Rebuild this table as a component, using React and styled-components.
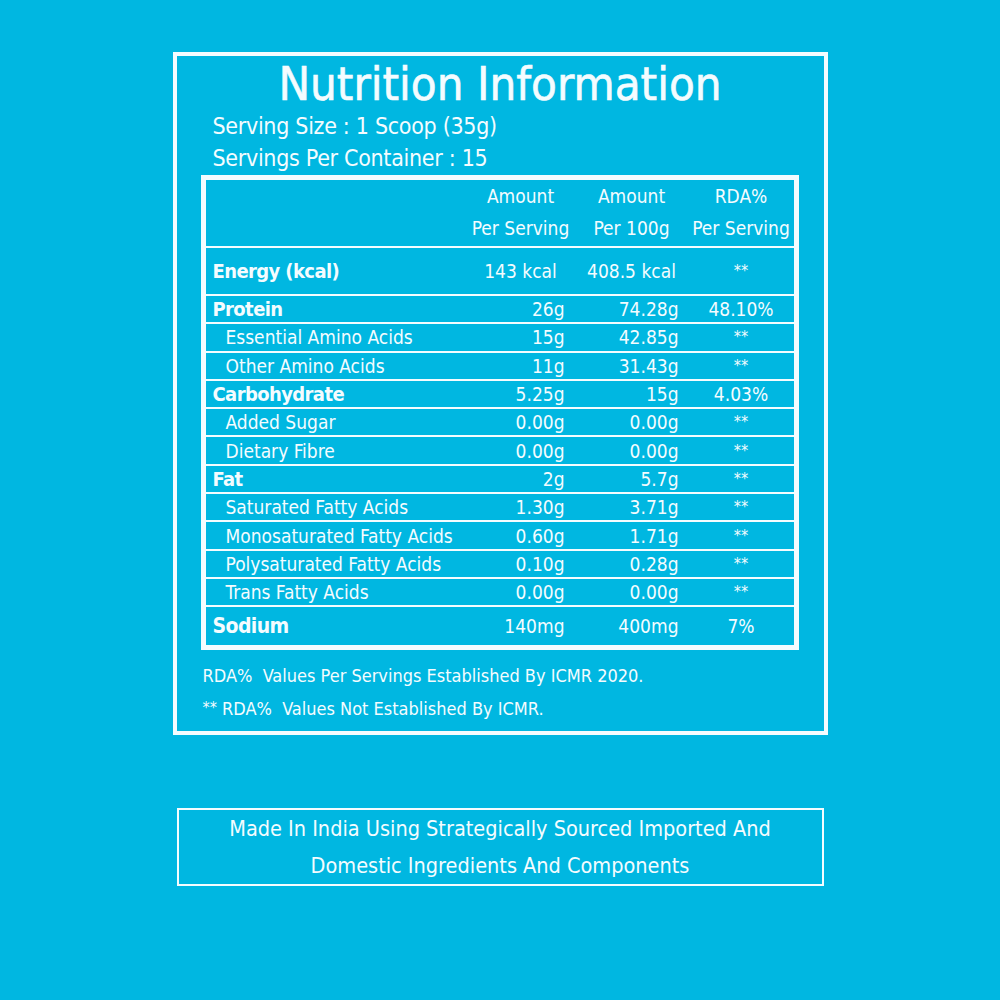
import React from "react";
import styled, { createGlobalStyle } from "styled-components";

const rows = [
  { label: "Protein", a: "26g", b: "74.28g", c: "48.10%", kind: "main" },
  { label: "Essential Amino Acids", a: "15g", b: "42.85g", c: "**", kind: "sub" },
  { label: "Other Amino Acids", a: "11g", b: "31.43g", c: "**", kind: "sub" },
  { label: "Carbohydrate", a: "5.25g", b: "15g", c: "4.03%", kind: "main" },
  { label: "Added Sugar", a: "0.00g", b: "0.00g", c: "**", kind: "sub" },
  { label: "Dietary Fibre", a: "0.00g", b: "0.00g", c: "**", kind: "sub" },
  { label: "Fat", a: "2g", b: "5.7g", c: "**", kind: "main" },
  { label: "Saturated Fatty Acids", a: "1.30g", b: "3.71g", c: "**", kind: "sub" },
  { label: "Monosaturated Fatty Acids", a: "0.60g", b: "1.71g", c: "**", kind: "sub" },
  { label: "Polysaturated Fatty Acids", a: "0.10g", b: "0.28g", c: "**", kind: "sub" },
  { label: "Trans Fatty Acids", a: "0.00g", b: "0.00g", c: "**", kind: "sub" },
];

const GlobalStyle = createGlobalStyle`
  body {
    margin: 0;
    background: #00b7e1;
    font-family: "DejaVu Sans Condensed", "DejaVu Sans", sans-serif;
    font-stretch: condensed;
    color: #f4fcff;
  }
`;

const Page = styled.div`
  width: 1000px;
  height: 1000px;
  padding-top: 52px;
  box-sizing: border-box;
  display: flex;
  flex-direction: column;
  align-items: center;
`;

const Panel = styled.div`
  width: 655px;
  height: 683px;
  box-sizing: border-box;
  border: 4px solid #f4fcff;
  display: flex;
  flex-direction: column;
  padding: 0 0 0 24px;
`;

const Title = styled.h1`
  margin: 2px 0 0 -24px;
  font-size: 47px;
  line-height: 52px;
  font-weight: 400;
  text-align: center;
  -webkit-text-stroke: 0.6px #f4fcff;
`;

const Serving = styled.div`
  margin-left: 12px;
  font-size: 23px;
  line-height: 32px;
  letter-spacing: -0.3px;
`;

const Table = styled.div`
  width: 598px;
  margin-top: 1px;
  box-sizing: border-box;
  border: 5px solid #f4fcff;
`;

const Row = styled.div`
  display: grid;
  grid-template-columns: 261px 108px 114px 105px;
  align-items: center;
  height: ${(p) => p.h}px;
  border-bottom: ${(p) => (p.last ? "none" : "2px solid #f4fcff")};
`;

const Label = styled.div`
  padding-left: ${(p) => (p.sub ? 20 : 7)}px;
  font-size: ${(p) => (p.sub ? 19 : p.big ? 21 : 20)}px;
  font-weight: ${(p) => (p.sub ? 400 : 700)};
  letter-spacing: ${(p) => (p.sub ? 0 : -0.6)}px;
  white-space: nowrap;
`;

const Value = styled.div`
  text-align: ${(p) => p.align || "right"};
  padding-right: ${(p) => (p.align === "center" ? 0 : 10)}px;
  font-size: 19px;
  white-space: nowrap;
`;

const Stars = styled.span`
  font-size: 16px;
  position: relative;
  top: -2px;
`;

const HeadCell = styled.div`
  align-self: start;
  text-align: center;
  font-size: 19px;
  line-height: 32px;
`;

const Notes = styled.div`
  margin-top: 9px;
  margin-left: 2px;
  font-size: 18px;
  line-height: 33px;
`;

const MadeIn = styled.div`
  width: 647px;
  height: 78px;
  margin-top: 73px;
  box-sizing: border-box;
  border: 2px solid #f4fcff;
  display: flex;
  flex-direction: column;
  justify-content: center;
  text-align: center;
  font-size: 21.5px;
  line-height: 37px;
`;

const Rda = ({ v }) => (v === "**" ? <Stars>**</Stars> : v);

export default function App() {
  return (
    <>
      <GlobalStyle />
      <Page>
        <Panel>
          <Title>Nutrition Information</Title>
          <Serving>Serving Size : 1 Scoop (35g)</Serving>
          <Serving>Servings Per Container : 15</Serving>
          <Table>
            <Row h={66}>
              <div />
              <HeadCell>Amount<br />Per Serving</HeadCell>
              <HeadCell>Amount<br />Per 100g</HeadCell>
              <HeadCell>RDA%<br />Per Serving</HeadCell>
            </Row>
            <Row h={46}>
              <Label>Energy (kcal)</Label>
              <Value align="center">143 kcal</Value>
              <Value align="center">408.5 kcal</Value>
              <Value align="center"><Stars>**</Stars></Value>
            </Row>
            {rows.map((r) => (
              <Row key={r.label} h={26.3}>
                <Label sub={r.kind === "sub"}>{r.label}</Label>
                <Value>{r.a}</Value>
                <Value>{r.b}</Value>
                <Value align="center"><Rda v={r.c} /></Value>
              </Row>
            ))}
            <Row h={38} last>
              <Label big>Sodium</Label>
              <Value>140mg</Value>
              <Value>400mg</Value>
              <Value align="center">7%</Value>
            </Row>
          </Table>
          <Notes>
            RDA%&nbsp; Values Per Servings Established By ICMR 2020.
            <br />
            <Stars>**</Stars>&nbsp;RDA%&nbsp; Values Not Established By ICMR.
          </Notes>
        </Panel>
        <MadeIn>
          <div>Made In India Using Strategically Sourced Imported And</div>
          <div>Domestic Ingredients And Components</div>
        </MadeIn>
      </Page>
    </>
  );
}
